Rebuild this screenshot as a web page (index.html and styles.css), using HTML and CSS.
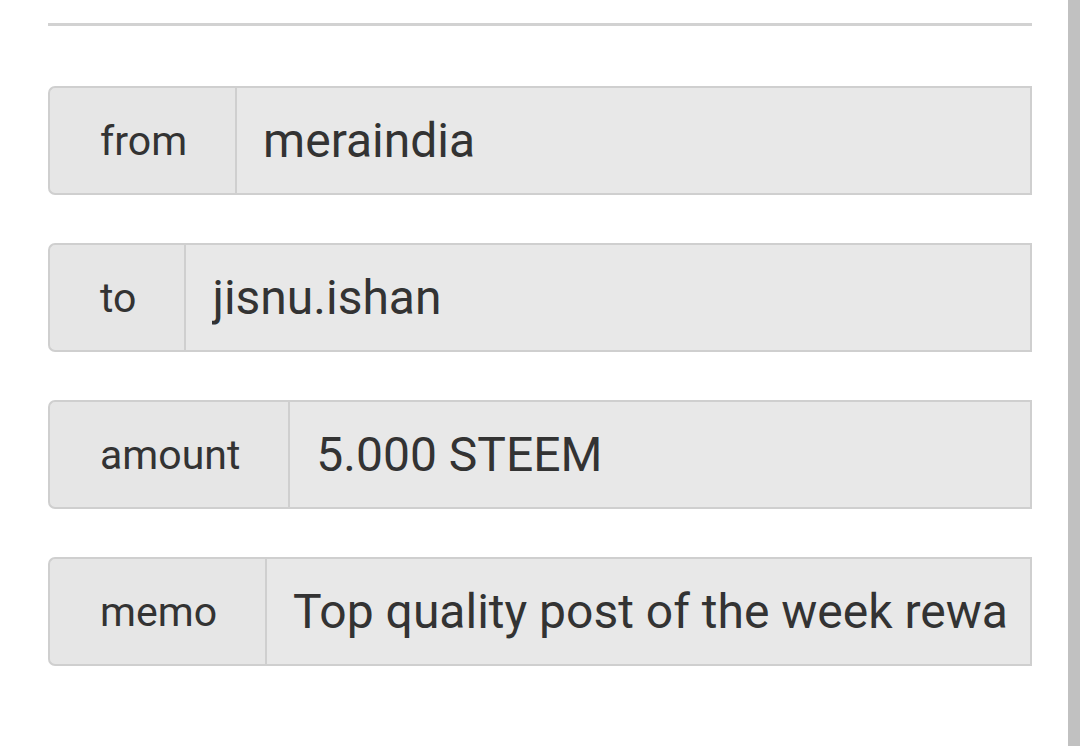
FILE: index.html
```html
<!DOCTYPE html>
<html>
<head>
<meta charset="utf-8">
<link rel="stylesheet" href="styles.css">
</head>
<body>
<div class="screen">
  <div class="page">
    <div class="rule"></div>
    <div class="form">
      <div class="group">
        <div class="label">from</div>
        <div class="value"><span class="text">meraindia</span></div>
      </div>
      <div class="group">
        <div class="label">to</div>
        <div class="value"><span class="text">jisnu.ishan</span></div>
      </div>
      <div class="group">
        <div class="label">amount</div>
        <div class="value"><span class="text">5.000 STEEM</span></div>
      </div>
      <div class="group">
        <div class="label">memo</div>
        <div class="value"><span class="text">Top quality post of the week rewa</span></div>
      </div>
    </div>
  </div>
  <div class="scrollbar"></div>
</div>
</body>
</html>
```
FILE: styles.css
```css
html, body {
  margin: 0;
  padding: 0;
  background: #ffffff;
}
body {
  font-family: Roboto, "Liberation Sans", sans-serif;
  color: #333333;
}
.screen {
  display: flex;
  width: 1080px;
  height: 746px;
  overflow: hidden;
}
.page {
  flex: 1;
  min-width: 0;
  padding: 23px 36px 0 48px;
}
.rule {
  height: 3px;
  background: #d2d2d2;
}
.form {
  display: flex;
  flex-direction: column;
  gap: 48px;
  margin-top: 60px;
}
.group {
  display: flex;
  height: 109px;
  box-sizing: border-box;
}
.label {
  flex-shrink: 0;
  display: flex;
  align-items: center;
  padding: 0 48px 0 50px;
  background: #e6e6e6;
  border: 2px solid #cfcfcf;
  border-right: none;
  border-radius: 7px 0 0 7px;
  font-size: 41px;
  color: #333333;
}
.value {
  flex: 1;
  display: flex;
  align-items: center;
  min-width: 0;
  padding: 0 22px 0 26px;
  background: #e8e8e8;
  border: 2px solid #cfcfcf;
  font-size: 48px;
  color: #333333;
}
.text {
  display: block;
  overflow: hidden;
  white-space: nowrap;
}
.scrollbar {
  flex-shrink: 0;
  width: 12px;
  height: 746px;
  background: #c1c1c1;
}
```
